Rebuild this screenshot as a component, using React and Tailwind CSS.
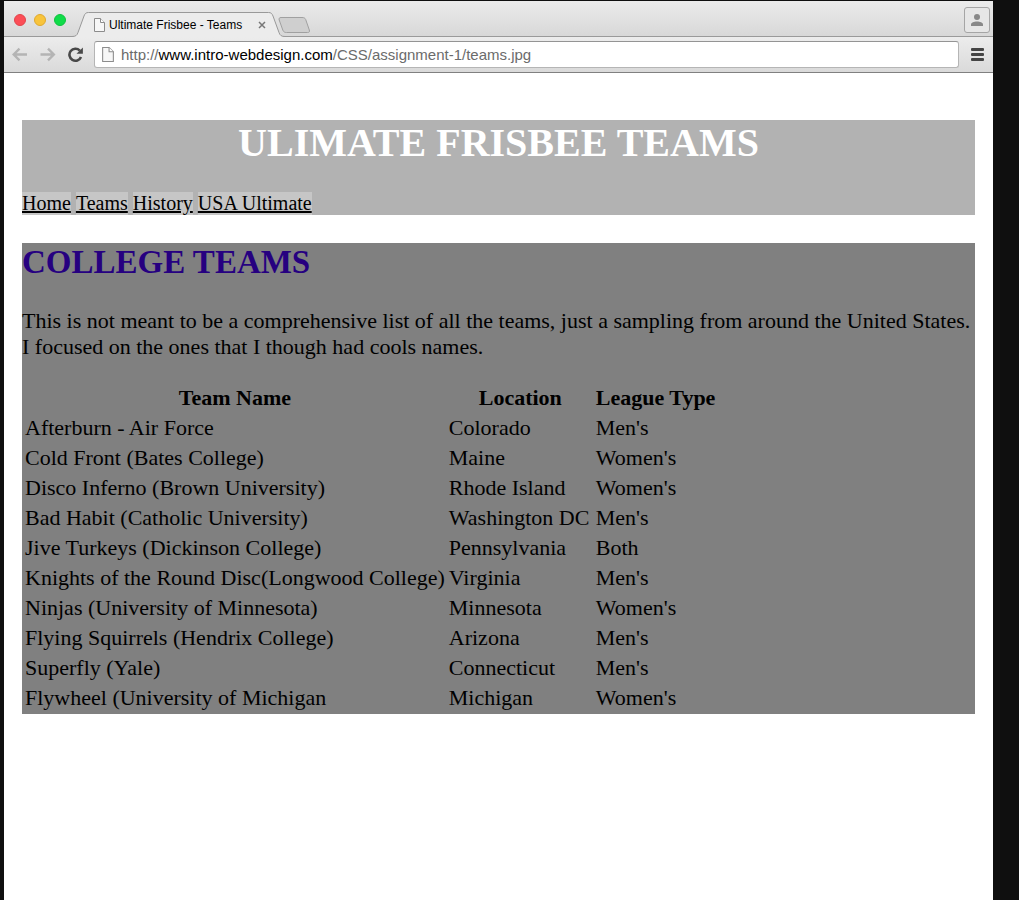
import React from "react";

const teams = [
  ["Afterburn - Air Force", "Colorado", "Men's"],
  ["Cold Front (Bates College)", "Maine", "Women's"],
  ["Disco Inferno (Brown University)", "Rhode Island", "Women's"],
  ["Bad Habit (Catholic University)", "Washington DC", "Men's"],
  ["Jive Turkeys (Dickinson College)", "Pennsylvania", "Both"],
  ["Knights of the Round Disc(Longwood College)", "Virginia", "Men's"],
  ["Ninjas (University of Minnesota)", "Minnesota", "Women's"],
  ["Flying Squirrels (Hendrix College)", "Arizona", "Men's"],
  ["Superfly (Yale)", "Connecticut", "Men's"],
  ["Flywheel (University of Michigan", "Michigan", "Women's"],
];

const links = ["Home", "Teams", "History", "USA Ultimate"];

function PageIcon({ className }) {
  return (
    <svg className={className} viewBox="0 0 11 14" fill="none" aria-hidden="true">
      <path d="M.5.5h6l4 4v9H.5z" fill="#f7f7f7" stroke="#8c8c8c" />
      <path d="M6.5.5v4h4" fill="#fff" stroke="#8c8c8c" />
    </svg>
  );
}

function Arrow({ back }) {
  return (
    <svg className="h-4 w-4" viewBox="0 0 16 16" fill="none" stroke="#b4b4b4" strokeWidth="2.4" aria-hidden="true">
      {back ? <path d="M15 7.500H2M7.500 1.700L1.700 7.500l5.800 5.800" /> : <path d="M.5 7.500H13.500M8 1.700l5.800 5.800L8 13.300" />}
    </svg>
  );
}

function TabStrip() {
  return (
    <div className="flex h-9 items-end border-b border-[#9a9a9a] bg-linear-to-b from-[#ebebeb] to-[#d8d8d8]">
      <div className="flex gap-2 self-center pl-[10px] pt-[3px]">
        <button aria-label="Close" className="h-3 w-3 rounded-full border border-[#e2444b] bg-[#fc4e57]" />
        <button aria-label="Minimize" className="h-3 w-3 rounded-full border border-[#e0a92e] bg-[#f8c43c]" />
        <button aria-label="Zoom" className="h-3 w-3 rounded-full border border-[#0fc23f] bg-[#10dc49]" />
      </div>
      <div className="relative -mb-px ml-[6px] flex h-[25px] w-[214px] items-center pl-[22px] pr-[20px]">
        <svg className="absolute inset-0 h-full w-full" viewBox="0 0 214 25" fill="none" aria-hidden="true">
          <path d="M0 24.500c3.500 0 5-1 6-4L12 4C13 1.500 14 .5 16.500.5h180c2.500 0 3.500 1 4.500 3.500l6 16.500c1 3 2.500 4 6 4h1V25H0z" fill="#ececec" />
          <path d="M0 24.500c3.500 0 5-1 6-4L12 4C13 1.500 14 .5 16.500.5h180c2.500 0 3.500 1 4.500 3.500l6 16.500c1 3 2.500 4 6 4h1" stroke="#999" />
        </svg>
        <PageIcon className="relative h-[14px] w-[11px]" />
        <span className="relative ml-1 flex-1 whitespace-nowrap font-['Liberation_Sans',sans-serif] text-[12px] text-black">
          Ultimate Frisbee - Teams
        </span>
        <button aria-label="Close tab" className="relative">
          <svg className="h-2 w-2" viewBox="0 0 8 8" stroke="#777" strokeWidth="1.500">
            <path d="M1 1l6 6M7 1L1 7" />
          </svg>
        </button>
      </div>
      <button aria-label="New tab" className="-ml-2 mb-[3px]">
        <svg className="h-4 w-8" viewBox="0 0 32 16">
          <path d="M3 .5h21c2 0 3 .5 3.700 2l3.600 10.500c.6 1.700 0 2.500-1.700 2.500H8.500c-2 0-3-.7-3.600-2.200L1.200 3C.7 1.500 1.300.5 3 .5z" fill="#cfcfcf" stroke="#a0a0a0" />
        </svg>
      </button>
      <button aria-label="Profile" className="mb-[3px] ml-auto mr-[3px] flex h-[26px] w-[26px] items-center justify-center rounded-[3px] border border-[#a5a5a5] bg-[#e6e6e6]">
        <svg className="h-3 w-3" viewBox="0 0 12 12" fill="#888" aria-hidden="true">
          <circle cx="6" cy="3" r="3" />
          <path d="M0 12v-1.500C0 8.500 3 7.500 6 7.500s6 1 6 3V12z" />
        </svg>
      </button>
    </div>
  );
}

function Toolbar() {
  return (
    <div className="flex h-9 items-center border-b border-[#808080] bg-linear-to-b from-[#ececec] to-[#dadada] pl-2">
      <button aria-label="Back"><Arrow back /></button>
      <button aria-label="Forward" className="ml-3"><Arrow /></button>
      <button aria-label="Reload" className="ml-3">
        <svg className="h-4 w-4" viewBox="0 0 16 16" fill="none" aria-hidden="true">
          <path d="M11.800 3.600A6 6 0 1 0 13 10" stroke="#484848" strokeWidth="2.600" />
          <path d="M14.900.4v6.400H8.500z" fill="#484848" />
        </svg>
      </button>
      <div className="ml-[10px] flex h-[27px] min-w-0 flex-1 items-center rounded-[3px] border border-[#b5b5b5] border-t-[#949494] bg-white pl-[7px] font-['Liberation_Sans',sans-serif] text-[15px]">
        <PageIcon className="h-[15px] w-[12px]" />
        <a href="http://www.intro-webdesign.com/CSS/assignment-1/teams.jpg" className="ml-[7px] whitespace-nowrap pt-px text-[#6b6b6b]">
          http://<span className="text-black">www.intro-webdesign.com</span>/CSS/assignment-1/teams.jpg
        </a>
      </div>
      <button aria-label="Menu" className="ml-3 mr-[9px]">
        <svg className="h-[13px] w-[13px]" viewBox="0 0 13 13" fill="#444" aria-hidden="true">
          <rect width="13" height="3" rx="1" />
          <rect y="5" width="13" height="3" rx="1" />
          <rect y="10" width="13" height="3" rx="1" />
        </svg>
      </button>
    </div>
  );
}

export default function App() {
  return (
    <div className="flex min-h-screen bg-[#0f0f0f] pl-1 pr-[26px] pt-px">
      <div className="min-w-0 flex-1 bg-white">
        <TabStrip />
        <Toolbar />
        <div className="px-[18px] pt-[47px] font-['Liberation_Serif',serif] text-[22px] leading-[26px] text-black">
          <header className="bg-[#b2b2b2]">
            <h1 className="pb-[26px] text-center text-[40px] leading-[46px] font-bold text-white">ULIMATE FRISBEE TEAMS</h1>
            <nav className="flex gap-[5px] text-[20px] leading-[23px]">
              {links.map((label) => (
                <a key={label} href="#" className="bg-[#c6c6c6] underline">{label}</a>
              ))}
            </nav>
          </header>
          <main className="mt-7 bg-[#808080]">
            <h2 className="text-[33px] leading-[38px] font-bold text-[#260080]">COLLEGE TEAMS</h2>
            <p className="mt-[27px] mb-[22px]">
              This is not meant to be a comprehensive list of all the teams, just a sampling from around the United States. I focused on the ones that I though had cools names.
            </p>
            <table className="border-separate border-spacing-[2px]">
              <thead>
                <tr>
                  {["Team Name", "Location", "League Type"].map((heading) => (
                    <th key={heading} scope="col" className="min-w-[145px] p-px text-center font-bold first:min-w-0 last:min-w-0">{heading}</th>
                  ))}
                </tr>
              </thead>
              <tbody>
                {teams.map((team) => (
                  <tr key={team[0]}>
                    {team.map((cell, i) => (
                      <td key={i} className="p-px">{cell}</td>
                    ))}
                  </tr>
                ))}
              </tbody>
            </table>
          </main>
        </div>
      </div>
    </div>
  );
}
